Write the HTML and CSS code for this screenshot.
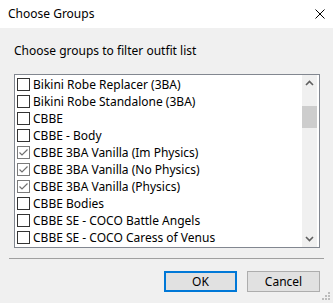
FILE: index.html
```html
<!DOCTYPE html>
<html lang="en">
<head>
    <meta charset="UTF-8">
    <title>Choose Groups</title>
    <link rel="stylesheet" href="styles.css">
</head>
<body>
    <div class="dialog">
        <div class="titlebar">
            <span class="title">Choose Groups</span>
            <svg class="close" width="10" height="10" viewBox="0 0 10 10">
                <path d="M0.5 0.5 L9.5 9.5 M9.5 0.5 L0.5 9.5" stroke="#000" stroke-width="1" fill="none"/>
            </svg>
        </div>

        <div class="content">
            <p class="prompt">Choose groups to filter outfit list</p>

            <div class="listbox">
                <ul class="items">
                    <li class="item"><span class="check"></span>Bikini Robe Replacer (3BA)</li>
                    <li class="item"><span class="check"></span>Bikini Robe Standalone (3BA)</li>
                    <li class="item"><span class="check"></span>CBBE</li>
                    <li class="item"><span class="check"></span>CBBE - Body</li>
                    <li class="item"><span class="check checked"></span>CBBE 3BA Vanilla (Im Physics)</li>
                    <li class="item"><span class="check checked"></span>CBBE 3BA Vanilla (No Physics)</li>
                    <li class="item"><span class="check checked"></span>CBBE 3BA Vanilla (Physics)</li>
                    <li class="item"><span class="check"></span>CBBE Bodies</li>
                    <li class="item"><span class="check"></span>CBBE SE - COCO Battle Angels</li>
                    <li class="item"><span class="check"></span>CBBE SE - COCO Caress of Venus</li>
                </ul>
                <div class="scrollbar">
                    <svg class="arrow" width="15" height="17" viewBox="0 0 15 17">
                        <path d="M4 10 L7.5 6.5 L11 10" stroke="#606060" stroke-width="1.6" fill="none"/>
                    </svg>
                    <div class="thumb"></div>
                    <div class="track"></div>
                    <svg class="arrow" width="15" height="17" viewBox="0 0 15 17">
                        <path d="M4 7 L7.5 10.5 L11 7" stroke="#606060" stroke-width="1.6" fill="none"/>
                    </svg>
                </div>
            </div>

            <div class="separator"></div>

            <div class="buttons">
                <button class="btn btn-default">OK</button>
                <button class="btn">Cancel</button>
            </div>
        </div>

        <svg class="grip" width="10" height="10" viewBox="0 0 10 10">
            <rect x="7" y="1" width="2" height="2" fill="#bcbcbc"/>
            <rect x="4" y="4" width="2" height="2" fill="#bcbcbc"/>
            <rect x="7" y="4" width="2" height="2" fill="#bcbcbc"/>
            <rect x="1" y="7" width="2" height="2" fill="#bcbcbc"/>
            <rect x="4" y="7" width="2" height="2" fill="#bcbcbc"/>
            <rect x="7" y="7" width="2" height="2" fill="#bcbcbc"/>
        </svg>
    </div>
</body>
</html>
```

FILE: styles.css
```css
body {
    margin: 0;
    padding: 0;
    font-family: 'Noto Sans', 'Open Sans', sans-serif;
    font-size: 12px;
    color: #000;
    background-color: #F0F0F0;
}
.dialog {
    position: relative;
    width: 333px;
    height: 303px;
    background-color: #F0F0F0;
    overflow: hidden;
}
.titlebar {
    display: flex;
    align-items: center;
    justify-content: space-between;
    height: 28px;
    padding: 0 8px;
    background-color: #FFFFFF;
}
.title {
    line-height: 16px;
    margin-top: -1px;
}
.close {
    display: block;
    margin-top: -1px;
}
.content {
    padding: 0 13px 0 14px;
}
.prompt {
    margin: 15px 0 0;
    line-height: 16px;
}
.listbox {
    display: flex;
    height: 172px;
    margin-top: 15px;
    border: 1px solid #828790;
    background-color: #FFFFFF;
}
.items {
    flex: 1;
    list-style: none;
    margin: 0;
    padding: 1px 0 0 2px;
}
.item {
    display: flex;
    align-items: center;
    height: 17px;
    white-space: nowrap;
}
.check {
    flex: none;
    width: 11px;
    height: 11px;
    margin-right: 3px;
    border: 1px solid #333333;
    background-color: #FFFFFF;
}
.check.checked {
    border-color: #7A7A7A;
    background: #FFFFFF url("data:image/svg+xml;utf8,<svg xmlns='http://www.w3.org/2000/svg' width='11' height='11'><path d='M1.5 5.5 L4 8 L9.5 2.5' stroke='%23707070' stroke-width='1.2' fill='none'/></svg>") no-repeat center;
}
.scrollbar {
    display: flex;
    flex-direction: column;
    width: 15px;
    margin-right: 2px;
    background-color: #F0F0F0;
}
.arrow {
    display: block;
    flex: none;
}
.thumb {
    height: 22px;
    margin-top: 14px;
    background-color: #CDCDCD;
}
.track {
    flex: 1;
}
.separator {
    height: 1px;
    margin: 10px -4px 0 -5px;
    background-color: #A0A0A0;
}
.buttons {
    display: flex;
    justify-content: flex-end;
    gap: 10px;
    margin-top: 12px;
}
.btn {
    box-sizing: border-box;
    width: 73px;
    height: 21px;
    padding: 0;
    font-family: inherit;
    font-size: 12px;
    color: #000;
    background-color: #E1E1E1;
    border: 1px solid #ADADAD;
    border-radius: 0;
}
.btn-default {
    border: 2px solid #0078D7;
}
.grip {
    position: absolute;
    right: 2px;
    bottom: 2px;
}
```
